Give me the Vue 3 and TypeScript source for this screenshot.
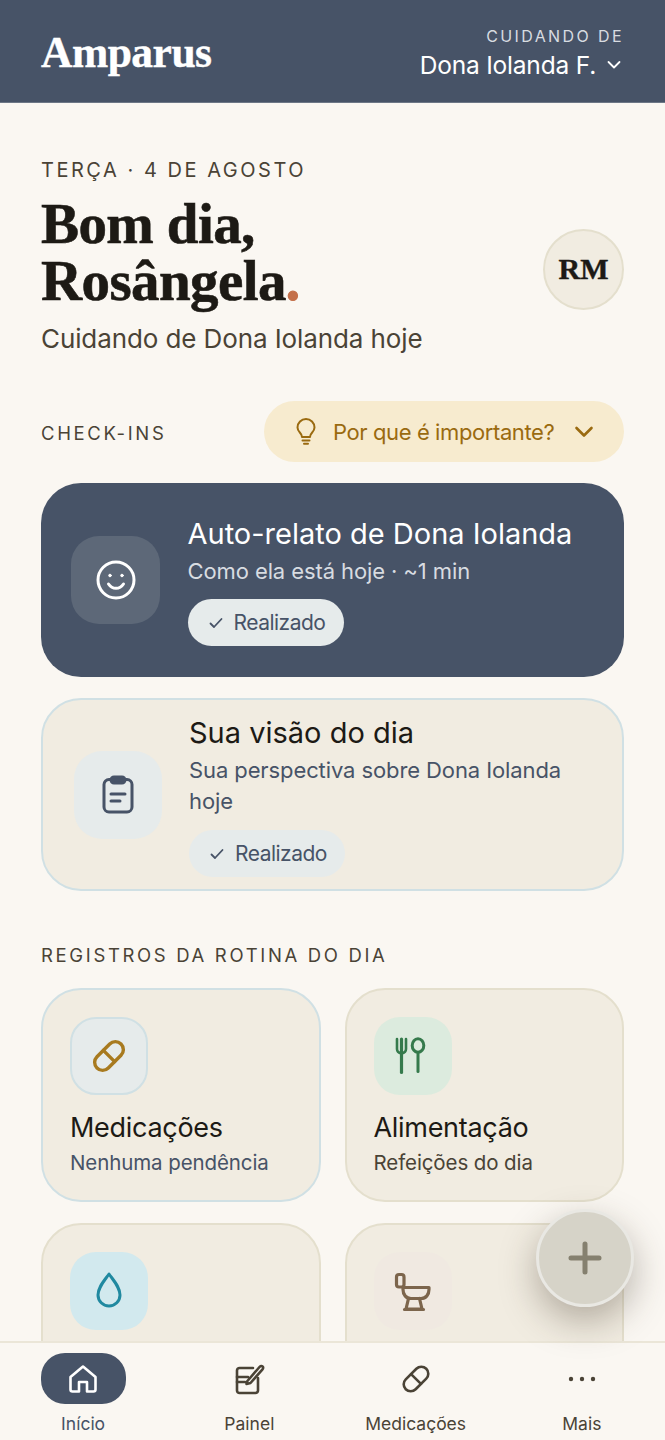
<template>
  <div class="screen">
    <header class="topbar">
      <span class="brand">Amparus</span>
      <div class="patient">
        <span class="patient-label">CUIDANDO DE</span>
        <span class="patient-name">
          Dona Iolanda F.
          <svg width="18" height="18" viewBox="0 0 18 18" fill="none" stroke="currentColor" stroke-width="1.8" stroke-linecap="round" stroke-linejoin="round"><path d="M3.500 6l5.500 5.500L14.500 6" /></svg>
        </span>
      </div>
    </header>

    <main class="content">
      <section class="hello">
        <div>
          <p class="eyebrow">TERÇA · 4 DE AGOSTO</p>
          <h1>Bom dia,<br />Rosângela<span class="dot">.</span></h1>
          <p class="hello-sub">Cuidando de Dona Iolanda hoje</p>
        </div>
        <div class="avatar">RM</div>
      </section>

      <div class="checkins-head">
        <span class="section-label">CHECK-INS</span>
        <div class="why">
          <svg width="24" height="28" viewBox="0 0 24 28" fill="none" stroke="currentColor" stroke-width="2" stroke-linecap="round" stroke-linejoin="round">
            <path d="M8 19c0-2-.8-3-2-4.300C4.600 13.200 3.500 11.500 3.500 9.500a8.500 8.500 0 0 1 17 0c0 2-1.100 3.700-2.500 5.200-1.200 1.300-2 2.300-2 4.300z" />
            <path d="M8.500 22.500h7M10 25.800h4" />
          </svg>
          <span class="why-text">Por que é importante?</span>
          <svg class="why-chev" width="22" height="22" viewBox="0 0 22 22" fill="none" stroke="currentColor" stroke-width="2.600" stroke-linecap="round" stroke-linejoin="round"><path d="M3.500 7l7.500 7.500L18.500 7" /></svg>
        </div>
      </div>

      <article class="task task-dark">
        <div class="task-icon">
          <svg width="44" height="44" viewBox="0 0 44 44" fill="none" stroke="currentColor" stroke-width="3" stroke-linecap="round">
            <circle cx="22" cy="22" r="18" />
            <path d="M14.500 26c2 3 4.500 4.300 7.500 4.300s5.500-1.300 7.500-4.300" />
            <circle cx="16" cy="17.500" r="1.300" fill="currentColor" stroke-width="1" />
            <circle cx="28" cy="17.500" r="1.300" fill="currentColor" stroke-width="1" />
          </svg>
        </div>
        <div class="task-body">
          <h2>Auto-relato de Dona Iolanda</h2>
          <p>Como ela está hoje · ~1 min</p>
          <span class="done">
            <svg width="16" height="16" viewBox="0 0 16 16" fill="none" stroke="currentColor" stroke-width="1.800" stroke-linecap="round" stroke-linejoin="round"><path d="M2.500 8.500l3.500 3.500 7.500-8" /></svg>
            Realizado
          </span>
        </div>
      </article>

      <article class="task task-light">
        <div class="task-icon">
          <svg width="44" height="44" viewBox="0 0 44 44" fill="none" stroke="currentColor" stroke-width="3" stroke-linecap="round" stroke-linejoin="round">
            <path d="M14 6.500h-1a5 5 0 0 0-5 5V34a5 5 0 0 0 5 5h18a5 5 0 0 0 5-5V11.500a5 5 0 0 0-5-5h-1" />
            <rect x="15" y="4" width="14" height="6" rx="3" fill="currentColor" />
            <path d="M15 21h14M15 28h9" />
          </svg>
        </div>
        <div class="task-body">
          <h2>Sua visão do dia</h2>
          <p>Sua perspectiva sobre Dona Iolanda hoje</p>
          <span class="done">
            <svg width="16" height="16" viewBox="0 0 16 16" fill="none" stroke="currentColor" stroke-width="1.800" stroke-linecap="round" stroke-linejoin="round"><path d="M2.500 8.500l3.500 3.500 7.500-8" /></svg>
            Realizado
          </span>
        </div>
      </article>

      <p class="section-label routine-label">REGISTROS DA ROTINA DO DIA</p>

      <div class="routine-grid">
        <div class="routine blue-edge">
          <div class="routine-icon ic-med">
            <svg width="44" height="44" viewBox="0 0 44 44" fill="none" stroke="#a87a1f" stroke-width="3.400" stroke-linecap="round">
              <g transform="rotate(-45 22 22)">
                <rect x="5" y="14" width="34" height="16" rx="8" />
                <path d="M22 14v16" />
              </g>
            </svg>
          </div>
          <h3>Medicações</h3>
          <p class="slate">Nenhuma pendência</p>
        </div>
        <div class="routine">
          <div class="routine-icon ic-food">
            <svg width="44" height="44" viewBox="0 0 44 44" fill="none" stroke="#357a4c" stroke-width="2.600" stroke-linecap="round">
              <path d="M6 5v10c0 2.500 2 4 4.500 4.500 2.500-.5 4.500-2 4.500-4.500V5" />
              <path d="M10.500 5v33.500" stroke-width="3.200" />
              <ellipse cx="27" cy="11.500" rx="5.800" ry="6.800" stroke-width="3" />
              <path d="M27 18.500v19" stroke-width="3" />
            </svg>
          </div>
          <h3>Alimentação</h3>
          <p>Refeições do dia</p>
        </div>
        <div class="routine">
          <div class="routine-icon ic-water">
            <svg width="44" height="44" viewBox="0 0 44 44" fill="none" stroke="#2089a0" stroke-width="3" stroke-linejoin="round">
              <path d="M22 5c5 7 11 13.500 11 21a11 11 0 0 1-22 0c0-7.500 6-14 11-21z" />
            </svg>
          </div>
        </div>
        <div class="routine">
          <div class="routine-icon ic-toilet">
            <svg width="44" height="44" viewBox="0 0 44 44" fill="none" stroke="#7c654c" stroke-width="3.200" stroke-linecap="round" stroke-linejoin="round">
              <rect x="5.500" y="5.500" width="7.500" height="12.500" rx="2.500" />
              <path d="M12 18.500h26v2c0 5-3 9-8 9H20c-5 0-8-4-8-9z" />
              <path d="M17.500 29.500L15 40h16l-2.500-10.500M13.500 40.500h19" />
            </svg>
          </div>
        </div>
      </div>
    </main>

    <button class="fab" type="button" aria-label="Adicionar">
      <svg width="36" height="36" viewBox="0 0 36 36" fill="none" stroke="currentColor" stroke-width="5" stroke-linecap="round"><path d="M18 4v28M4 18h28" /></svg>
    </button>

    <nav class="tabs">
      <div v-for="tab in tabs" :key="tab.label" class="tab" :class="{ active: tab.active }">
        <div class="tab-icon">
          <svg v-if="tab.icon === 'home'" width="32" height="32" viewBox="0 0 32 32" fill="none" stroke="currentColor" stroke-width="2.600" stroke-linejoin="round">
            <path d="M16 3.500L3.500 14v12.500a2 2 0 0 0 2 2h6.500v-9.500h8v9.500h6.500a2 2 0 0 0 2-2V14z" />
          </svg>
          <svg v-else-if="tab.icon === 'edit'" width="34" height="34" viewBox="0 0 34 34" fill="none" stroke="currentColor" stroke-width="2.600" stroke-linecap="round" stroke-linejoin="round">
            <path d="M21 6H7.500A2.500 2.500 0 0 0 5 8.500v20A2.500 2.500 0 0 0 7.500 31h16a2.500 2.500 0 0 0 2.500-2.500V16" />
            <path d="M15 19.500L27.500 5c1-1.200 2.300-1.300 3-.6s.8 2-.2 3.200L18.500 21l-4 1zM5 15h11M5 20h8" />
          </svg>
          <svg v-else-if="tab.icon === 'pill'" width="34" height="34" viewBox="0 0 34 34" fill="none" stroke="currentColor" stroke-width="2.600" stroke-linecap="round">
            <g transform="rotate(-45 17 17)">
              <rect x="2.500" y="10" width="29" height="14" rx="7" />
              <path d="M17 10v14" />
            </g>
          </svg>
          <svg v-else width="34" height="34" viewBox="0 0 34 34" fill="currentColor">
            <circle cx="6" cy="17" r="2.200" /><circle cx="17" cy="17" r="2.200" /><circle cx="28" cy="17" r="2.200" />
          </svg>
        </div>
        <span class="tab-label">{{ tab.label }}</span>
      </div>
    </nav>
  </div>
</template>

<script setup lang="ts">
interface Tab {
  label: string
  icon: 'home' | 'edit' | 'pill' | 'more'
  active?: boolean
}

const tabs: Tab[] = [
  { label: 'Início', icon: 'home', active: true },
  { label: 'Painel', icon: 'edit' },
  { label: 'Medicações', icon: 'pill' },
  { label: 'Mais', icon: 'more' },
]
</script>

<style>
html,
body {
  margin: 0;
  background: #faf7f2;
}
</style>

<style scoped>
.screen {
  position: relative;
  width: 665px;
  height: 1440px;
  display: flex;
  flex-direction: column;
  overflow: hidden;
  background: #faf7f2;
  font-family: Inter, "Noto Sans", sans-serif;
  color: #1d1a15;
}

h1,
h2,
h3,
p {
  margin: 0;
  font-weight: 400;
}

.topbar {
  flex: none;
  height: 103px;
  box-sizing: border-box;
  padding: 3px 41px 0;
  display: flex;
  align-items: center;
  justify-content: space-between;
  background: #475367;
  color: #fff;
  border-bottom: 1px solid #6d7786;
}

.brand {
  margin-top: -2px;
  font-family: "Liberation Serif", serif;
  font-weight: 700;
  font-size: 43.500px;
  letter-spacing: -0.5px;
  -webkit-text-stroke: 0.4px #fff;
}

.patient {
  display: flex;
  flex-direction: column;
  align-items: flex-end;
  gap: 4px;
}

.patient-label {
  font-size: 16px;
  letter-spacing: 2.400px;
  color: #d8dce1;
}

.patient-name {
  display: flex;
  align-items: center;
  gap: 9px;
  margin-right: -1px;
  font-size: 24.500px;
  letter-spacing: -0.2px;
}

.patient-name svg {
  margin-right: 2px;
}

.content {
  flex: 1;
  min-height: 0;
  overflow: hidden;
  padding: 0 41px;
}

.hello {
  display: flex;
  align-items: center;
  justify-content: space-between;
  padding-top: 53px;
}

.eyebrow {
  font-size: 20px;
  letter-spacing: 2.520px;
  color: #4a4336;
  line-height: 28px;
}

h1 {
  margin-top: 11px;
  font-family: "Liberation Serif", serif;
  font-weight: 700;
  font-size: 57px;
  line-height: 57px;
  letter-spacing: -0.6px;
  color: #1d1a15;
  -webkit-text-stroke: 0.6px #1d1a15;
}

.dot {
  color: #c4704a;
  -webkit-text-stroke: 1.2px #c4704a;
}

.hello-sub {
  margin-top: 11px;
  font-size: 26px;
  line-height: 38px;
  letter-spacing: -0.1px;
  color: #4a4336;
}

.avatar {
  flex: none;
  width: 81px;
  height: 81px;
  margin-top: 24px;
  box-sizing: border-box;
  border: 2px solid #e4dfcd;
  border-radius: 50%;
  background: #f1ece1;
  display: flex;
  align-items: center;
  justify-content: center;
  font-family: "Liberation Serif", serif;
  font-weight: 700;
  font-size: 30px;
  -webkit-text-stroke: 0.4px #1d1a15;
}

.checkins-head {
  margin-top: 43px;
  display: flex;
  align-items: center;
  justify-content: space-between;
}

.section-label {
  padding-top: 2px;
  font-size: 18.500px;
  letter-spacing: 2.650px;
  color: #4a4336;
}

.why {
  width: 360px;
  height: 61px;
  box-sizing: border-box;
  padding: 0 29px 0 30px;
  border-radius: 31px;
  background: #f7ebcf;
  color: #9a6a10;
  display: flex;
  align-items: center;
  gap: 15px;
  font-size: 22px;
  letter-spacing: -0.4px;
}

.why-text {
  white-space: nowrap;
}

.why-chev {
  margin-left: auto;
}

.task {
  box-sizing: border-box;
  display: flex;
  align-items: center;
  border-radius: 40px;
}

.task-dark {
  height: 194px;
  margin-top: 21px;
  padding: 0 30px;
  background: #475367;
  color: #fff;
}

.task-light {
  height: 193px;
  margin-top: 21px;
  padding: 0 31px;
  background: #f1ece1;
  border: 2px solid #d0e0e4;
}

.task-icon {
  flex: none;
  width: 88px;
  height: 88px;
  margin-right: 27px;
  border-radius: 28px;
  display: flex;
  align-items: center;
  justify-content: center;
}

.task-dark .task-icon {
  width: 89px;
  margin-right: 27.500px;
  background: #5d6878;
}

.task-light .task-icon {
  background: #e6ebeb;
  color: #475367;
}

.task-dark .task-body {
  padding-top: 1px;
}

.task-light .task-body {
  padding-top: 2px;
}

.task-body h2 {
  font-size: 29px;
  line-height: 38px;
}

.task-body p {
  margin-top: 3px;
  font-size: 22px;
  line-height: 31px;
  letter-spacing: -0.1px;
}

.task-dark .task-body p {
  color: #d8dce1;
}

.task-light .task-body p {
  color: #475367;
}

.done {
  margin-top: 12px;
  width: 156px;
  height: 47px;
  box-sizing: border-box;
  padding-left: 20px;
  border-radius: 24px;
  background: #e6ebeb;
  color: #475367;
  display: flex;
  align-items: center;
  gap: 10px;
  font-size: 21px;
  letter-spacing: -0.5px;
}

.task-light .done {
  margin-top: 13px;
}

.routine-label {
  display: block;
  margin-top: 49px;
  line-height: 26px;
}

.routine-grid {
  margin-top: 20px;
  display: grid;
  grid-template-columns: 1fr 1fr;
  gap: 21px 24px;
}

.routine {
  box-sizing: border-box;
  height: 214px;
  padding: 27px 27px 0;
  border-radius: 40px;
  background: #f1ece1;
  border: 2px solid #e4dfcd;
}

.blue-edge {
  border-color: #d0e0e4;
}

.routine-icon {
  width: 78px;
  height: 78px;
  border-radius: 26px;
  display: flex;
  align-items: center;
  justify-content: center;
}

.ic-med {
  box-sizing: border-box;
  background: #e6ebeb;
  border: 2px solid #d0e0e4;
}

.ic-food {
  background: #dcebde;
}

.ic-water {
  background: #d2e9ee;
}

.ic-toilet {
  background: #f0e9e1;
}

.routine h3 {
  margin-top: 15px;
  font-size: 27px;
  line-height: 36px;
  letter-spacing: -0.3px;
}

.routine p {
  margin-top: 2px;
  font-size: 20.500px;
  line-height: 30px;
  letter-spacing: -0.1px;
  color: #4a4336;
}

.routine p.slate {
  color: #475367;
}

.fab {
  position: absolute;
  left: 536px;
  top: 1209px;
  width: 98px;
  height: 98px;
  box-sizing: border-box;
  padding: 0;
  border: 3px solid #e9e8e3;
  border-radius: 50%;
  background: #d6d3c8;
  color: #85806f;
  display: flex;
  align-items: center;
  justify-content: center;
  box-shadow: 0 14px 36px rgba(60, 50, 35, 0.35);
}

.tabs {
  flex: none;
  height: 99px;
  box-sizing: border-box;
  display: grid;
  grid-template-columns: repeat(4, 1fr);
  border-top: 2px solid #ebe6d8;
  background: #faf7f2;
}

.tab {
  padding-top: 10px;
  display: flex;
  flex-direction: column;
  align-items: center;
  color: #4a4336;
}

.tab-icon {
  width: 85px;
  height: 51px;
  border-radius: 24px;
  display: flex;
  align-items: center;
  justify-content: center;
}

.tab.active .tab-icon {
  background: #475367;
  color: #fff;
}

.tab.active .tab-label {
  color: #475367;
}

.tab-label {
  margin-top: 8px;
  font-size: 17.500px;
  line-height: 24px;
}
</style>
